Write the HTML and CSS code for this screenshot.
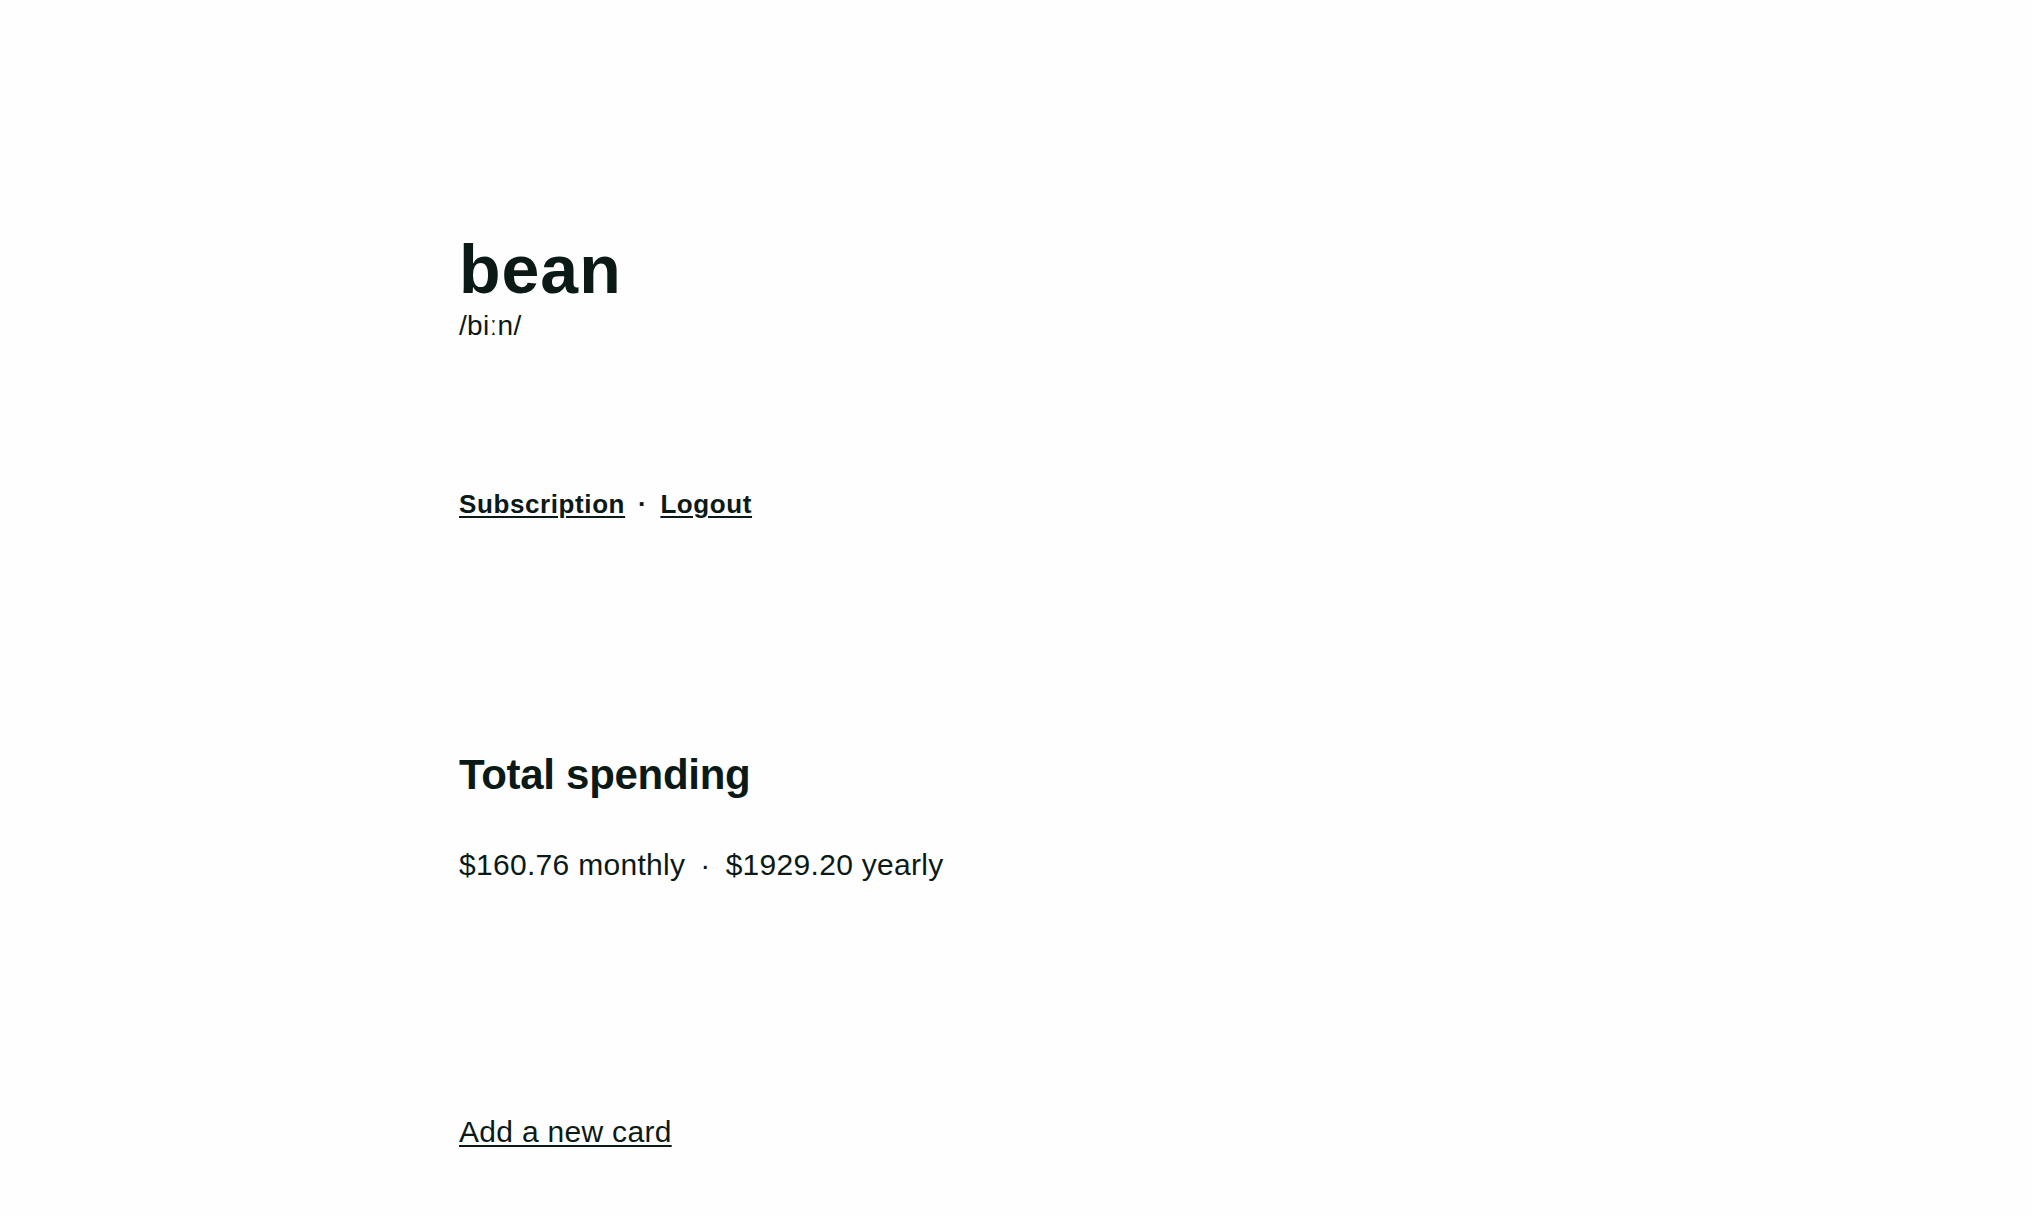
FILE: index.html
```html
<!DOCTYPE html>
<html lang="en">
<head>
    <meta charset="UTF-8">
    <meta name="viewport" content="width=device-width, initial-scale=1.0">
    <title>bean</title>
    <link rel="stylesheet" href="styles.css">
</head>
<body>
    <div class="container">
        <!-- Header -->
        <header class="brand">
            <h1 class="logo">bean</h1>
            <p class="phonetic">/biːn/</p>
        </header>

        <nav class="nav">
            <a href="#">Subscription</a>
            <span class="sep">·</span>
            <a href="#">Logout</a>
        </nav>

        <!-- Spending summary -->
        <section class="spending">
            <h2>Total spending</h2>
            <p class="amounts">
                <span>$160.76 monthly</span>
                <span class="sep">·</span>
                <span>$1929.20 yearly</span>
            </p>
        </section>

        <div class="cards">
            <a href="#" class="add-card">Add a new card</a>
        </div>
    </div>
</body>
</html>
```

FILE: styles.css
```css
body {
    font-family: "Liberation Sans", Arial, Helvetica, sans-serif;
    margin: 0;
    background-color: #fefefe;
    color: #0b1a16;
}
.container {
    padding: 235px 0 0 459px;
}
a {
    color: #0b1a16;
    text-decoration: underline;
    text-decoration-thickness: 2px;
    text-underline-offset: 3px;
}
.logo {
    font-size: 68px;
    line-height: 1;
    font-weight: 700;
    letter-spacing: 1px;
    margin: 0;
}
.phonetic {
    font-size: 28px;
    line-height: 1;
    letter-spacing: 0.3px;
    margin: 9px 0 0;
}
.nav {
    font-size: 26px;
    line-height: 1;
    font-weight: 700;
    letter-spacing: 0.6px;
    margin-top: 151px;
    display: flex;
    align-items: baseline;
}
.nav .sep {
    margin: 0 13px;
}
.spending {
    margin-top: 237px;
}
.spending h2 {
    font-size: 42px;
    line-height: 1;
    font-weight: 700;
    letter-spacing: -0.3px;
    margin: 0;
}
.amounts {
    font-size: 30px;
    line-height: 1;
    letter-spacing: 0.3px;
    margin: 54px 0 0;
    display: flex;
    align-items: baseline;
}
.amounts .sep {
    margin: 0 15px;
}
.cards {
    margin-top: 237px;
    font-size: 30px;
    line-height: 1;
    letter-spacing: 0.3px;
}
.add-card {
    text-decoration-thickness: 1.5px;
}
```
